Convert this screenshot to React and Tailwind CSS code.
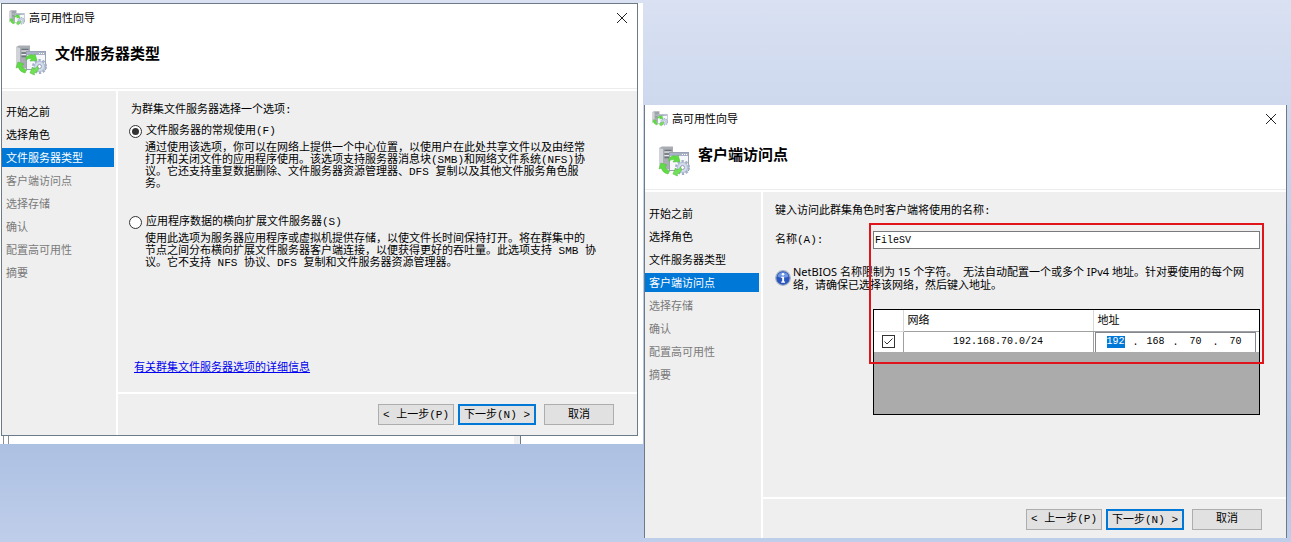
import { useState } from "react";

const STEPS = ["开始之前", "选择角色", "文件服务器类型", "客户端访问点", "选择存储", "确认", "配置高可用性", "摘要"];

function ClusterIcon({ className }) {
    return (
        <svg className={className} viewBox="0 0 32 32" aria-hidden="true">
            {/* server tower */}
            <path d="M1 2l3-1.500h11v23H5l-4-3z" fill="#a9adb3" />
            <path d="M1 2l4 1v21l-4-3z" fill="#d0d3d8" />
            <path d="M6.500 4.500h7M6.500 8h7M6.500 11.500h7" stroke="#6d737b" strokeWidth="1.500" />
            <path d="M6.500 6h7M6.500 9.500h7" stroke="#e9ebee" />
            {/* window */}
            <rect x="11.500" y="6.500" width="19" height="18" fill="#f6f8fc" stroke="#9aa1b0" />
            <path d="M12 7h18v3H12z" fill="#a9b1c6" />
            <path d="M24 8.500h1M26 8.500h1M28 8.500h1" stroke="#fff" />
            {/* gear */}
            <circle cx="24.500" cy="21.500" r="6" fill="#dfe6f2" stroke="#a3afc6" strokeWidth="3" strokeDasharray="2.200 1.600" />
            <circle cx="24.500" cy="21.500" r="5" fill="#d3dcec" stroke="#b4bfd3" />
            <circle cx="24.500" cy="21.500" r="2" fill="#fff" stroke="#93a0b9" />
            {/* arrows */}
            <path d="M11 12.500c2-2.500 5-3.500 8-2l1-1.500 2 6.500-7 .5 1.500-2c-2-1-3.500-.5-5.500 1.500z" fill="#5fdc43" stroke="#52c03c" strokeWidth=".6" />
            <path d="M3 17l6 2-2 1.500c.5 2.500 2 3.500 4.500 4.500L10 28c-4-1-6-3-6.500-6L1 23z" fill="#5fdc43" stroke="#52c03c" strokeWidth=".6" />
            <path d="M15 28l2.500-6 1 2c2-.5 3-1.500 4-3l1 3c-1 2.500-2.500 3.500-4.500 4L19.500 30z" fill="#72e058" stroke="#52c03c" strokeWidth=".6" />
        </svg>
    );
}

function InfoIcon() {
    return (
        <svg className="h-4 w-4 shrink-0" viewBox="0 0 16 16" aria-hidden="true">
            <circle cx="8" cy="8" r="7.300" fill="#2b57bd" stroke="#a9b3c4" strokeWidth="1.200" />
            <path d="M2.500 6.500a5.700 5.700 0 0 1 11 0c-3 1.600-8 1.600-11 0z" fill="#6f97e4" />
            <circle cx="8" cy="4.300" r="1.300" fill="#fff" />
            <path d="M6.300 6.700h2.800v4.800h1v1.200H6.200v-1.200h1V7.900h-.9z" fill="#fff" />
        </svg>
    );
}

function Wizard({ heading, active, className, navClassName, footerClassName, children }) {
    return (
        <section className={`flex flex-col bg-white ${className}`}>
            <div className="flex h-[27px] items-center pl-[7px] pr-2">
                <ClusterIcon className="h-4 w-4" />
                <span className="ml-1 flex-1 font-['Noto_Sans_CJK_SC',sans-serif] text-[11px]">高可用性向导</span>
                <button type="button" aria-label="关闭" className="p-px">
                    <svg className="h-3 w-3" viewBox="0 0 12 12" fill="none" stroke="#222">
                        <path d="M1 1l10 10M11 1L1 11" />
                    </svg>
                </button>
            </div>
            <div className="flex h-[57px] items-start pl-[13px]">
                <ClusterIcon className="mt-[14px] h-8 w-8" />
                <h1 className="mt-[14px] ml-2 text-[15px] leading-[22px] font-bold">{heading}</h1>
            </div>
            <div className="mb-0.5 h-px bg-[#ececec]" />
            <div className="flex flex-1 bg-[#efefef]">
                <nav className={`shrink-0 border-r-2 border-white ${navClassName}`}>
                    <ul className="mr-0.5">
                        {STEPS.map((step, i) => (
                            <li
                                key={step}
                                className={`mb-1 pt-[3px] pl-1 text-[11px] leading-4 ${
                                    i === active ? "bg-[#0078d7] text-white" : i < active ? "text-black" : "text-[#7a7a7a]"
                                }`}
                            >
                                {step}
                            </li>
                        ))}
                    </ul>
                </nav>
                <div className="flex min-w-0 flex-1 flex-col">
                    <div className="relative flex-1">{children}</div>
                    <footer className={`flex justify-end border-t-2 border-white pt-[10px] ${footerClassName}`}>
                        <button type="button" className="mr-1 h-[21px] w-[76px] border border-[#adadad] bg-[#e1e1e1] pt-px">
                            &lt; 上一步(P)
                        </button>
                        <button type="button" className="mr-2 h-[21px] w-[78px] border-2 border-[#0078d7] bg-[#e1e1e1] pt-px">
                            下一步(N) &gt;
                        </button>
                        <button type="button" className="h-[21px] w-[70px] border border-[#adadad] bg-[#e1e1e1] pt-px">
                            取消
                        </button>
                    </footer>
                </div>
            </div>
        </section>
    );
}

function RadioOption({ value, selected, onSelect, label, children }) {
    return (
        <div>
            <label className="flex h-5 items-center gap-1">
                <input
                    type="radio"
                    name="server-type"
                    value={value}
                    checked={selected === value}
                    onChange={() => onSelect(value)}
                    className="grid h-[13px] w-[13px] appearance-none place-items-center rounded-full border border-[#333] bg-white checked:before:h-[7px] checked:before:w-[7px] checked:before:rounded-full checked:before:bg-[#333] checked:before:content-['']"
                />
                {label}
            </label>
            <p className="mt-px pl-4 leading-[12px] whitespace-nowrap">{children}</p>
        </div>
    );
}

function FileServerType() {
    const [selected, setSelected] = useState("general");

    return (
        <div className="pt-[9px] pb-[14px] pl-[11px]">
            <p className="mb-px pl-0.5 leading-5">为群集文件服务器选择一个选项:</p>
            <RadioOption value="general" selected={selected} onSelect={setSelected} label="文件服务器的常规使用(F)">
                通过使用该选项，你可以在网络上提供一个中心位置，以使用户在此处共享文件以及由经常
                <br />
                打开和关闭文件的应用程序使用。该选项支持服务器消息块(SMB)和网络文件系统(NFS)协
                <br />
                议。它还支持重复数据删除、文件服务器资源管理器、DFS 复制以及其他文件服务角色服
                <br />
                务。
            </RadioOption>
            <div className="h-[22px]" />
            <RadioOption value="scaleout" selected={selected} onSelect={setSelected} label="应用程序数据的横向扩展文件服务器(S)">
                使用此选项为服务器应用程序或虚拟机提供存储，以使文件长时间保持打开。将在群集中的
                <br />
                节点之间分布横向扩展文件服务器客户端连接，以便获得更好的吞吐量。此选项支持 SMB 协
                <br />
                议。它不支持 NFS 协议、DFS 复制和文件服务器资源管理器。
            </RadioOption>
            <a href="#details" className="mt-[89px] ml-[5px] inline-block leading-5 text-[#0000ee] underline">
                有关群集文件服务器选项的详细信息
            </a>
        </div>
    );
}

function AddressInput() {
    const [parts, setParts] = useState(["192", "168", "70", "70"]);

    const handleChange = (index, value) => {
        setParts(parts.map((part, i) => (i === index ? value : part)));
    };

    return (
        <div className="flex h-5 items-center border border-b-0 border-[#828790] bg-white pl-[11px] text-[10px]">
            {parts.map((part, i) => (
                <div key={i} className="flex items-center">
                    {i > 0 && <span className="w-[22px] text-center">.</span>}
                    <input
                        type="text"
                        aria-label={`地址 ${i + 1}`}
                        value={part}
                        onChange={(e) => handleChange(i, e.target.value)}
                        className={`h-3 w-[18px] text-center leading-3 ${i === 0 ? "bg-[#0078d7] text-white" : ""}`}
                    />
                </div>
            ))}
        </div>
    );
}

function ClientAccessPoint() {
    const [name, setName] = useState("FileSV");
    const [enabled, setEnabled] = useState(true);

    return (
        <div className="pt-[9px] pr-[26px] pb-[82px] pl-3">
            <p className="leading-5">键入访问此群集角色时客户端将使用的名称:</p>
            <div className="mt-[10px] flex items-center">
                <label htmlFor="access-name" className="w-[98px] shrink-0 leading-[18px]">
                    名称(A):
                </label>
                <input
                    id="access-name"
                    type="text"
                    value={name}
                    onChange={(e) => setName(e.target.value)}
                    className="h-[18px] min-w-0 flex-1 border border-[#7a7a7a] bg-white px-px text-[10px]"
                />
            </div>
            <div className="mt-4 flex items-center gap-0.5 font-['Noto_Sans','Noto_Sans_CJK_SC',sans-serif]">
                <InfoIcon />
                <p className="leading-[13px] whitespace-nowrap">
                    NetBIOS 名称限制为 15 个字符。&nbsp; 无法自动配置一个或多个 IPv4 地址。针对要使用的每个网
                    <br />
                    络，请确保已选择该网络，然后键入地址。
                </p>
            </div>
            <div className="mt-[18px] ml-[98px] border border-black bg-[#ababab] pb-[62px]">
                <table className="w-full table-fixed border-collapse bg-white">
                    <thead>
                        <tr className="h-[21px] text-left">
                            <th className="w-[29px] border-r border-b border-[#d8d8d8]" />
                            <th className="border-r border-b border-[#d8d8d8] border-b-[#a0a0a0] pt-0.5 pl-1 font-normal">网络</th>
                            <th className="w-[166px] border-b border-[#a0a0a0] pt-0.5 pl-1 font-normal">地址</th>
                        </tr>
                    </thead>
                    <tbody>
                        <tr className="h-5">
                            <td className="border-r border-[#a0a0a0]">
                                <label className="grid place-items-center">
                                    <input
                                        type="checkbox"
                                        aria-label="使用网络 192.168.70.0/24"
                                        checked={enabled}
                                        onChange={(e) => setEnabled(e.target.checked)}
                                        className="col-start-1 row-start-1 h-[13px] w-[13px] appearance-none border border-[#333] bg-white"
                                    />
                                    {enabled && (
                                        <svg
                                            className="pointer-events-none col-start-1 row-start-1 h-[11px] w-[11px]"
                                            viewBox="0 0 11 11"
                                            fill="none"
                                            stroke="#333"
                                        >
                                            <path d="M1.500 5.500l2.500 2.500 5.500-5.500" />
                                        </svg>
                                    )}
                                </label>
                            </td>
                            <td className="border-r border-[#a0a0a0] text-center text-[10px]">192.168.70.0/24</td>
                            <td className="pr-[3px] pl-px">
                                <AddressInput />
                            </td>
                        </tr>
                    </tbody>
                </table>
            </div>
            {/* highlight around the fields to fill in */}
            <div className="pointer-events-none absolute top-[31px] right-[22px] left-[106px] h-[141px] border-2 border-[#e0141b]" />
        </div>
    );
}

export default function App() {
    return (
        <main
            lang="zh-CN"
            className="grid min-h-screen grid-cols-[643fr_648fr] items-start bg-linear-to-b from-[#d9e1f2] via-[#abbfe2] via-80% to-[#bfceea] font-['Liberation_Mono','Noto_Sans_CJK_SC',monospace] text-[11px] text-black"
        >
            <div className="mt-[3px] bg-white pr-[5px] pl-px">
                <Wizard
                    heading="文件服务器类型"
                    active={2}
                    className="border border-[#6d7a88]"
                    navClassName="w-[116px] pt-[11px]"
                    footerClassName="pr-[23px] pb-[10px]"
                >
                    <FileServerType />
                </Wizard>
                {/* window frame showing below the dialog */}
                <div className="flex h-2 pl-0.5">
                    <div className="w-[6px] border-x border-[#8a8f96]" />
                    <div className="ml-[505px] w-[7px] border-r border-[#6d7a88] bg-[#f0f0f0]" />
                </div>
            </div>
            <div className="mt-[105px] pr-1 pl-px">
                <Wizard
                    heading="客户端访问点"
                    active={3}
                    className="border-x border-[#6d7a88]"
                    navClassName="w-[118px] pt-3"
                    footerClassName="pr-6 pb-2"
                >
                    <ClientAccessPoint />
                </Wizard>
            </div>
        </main>
    );
}
